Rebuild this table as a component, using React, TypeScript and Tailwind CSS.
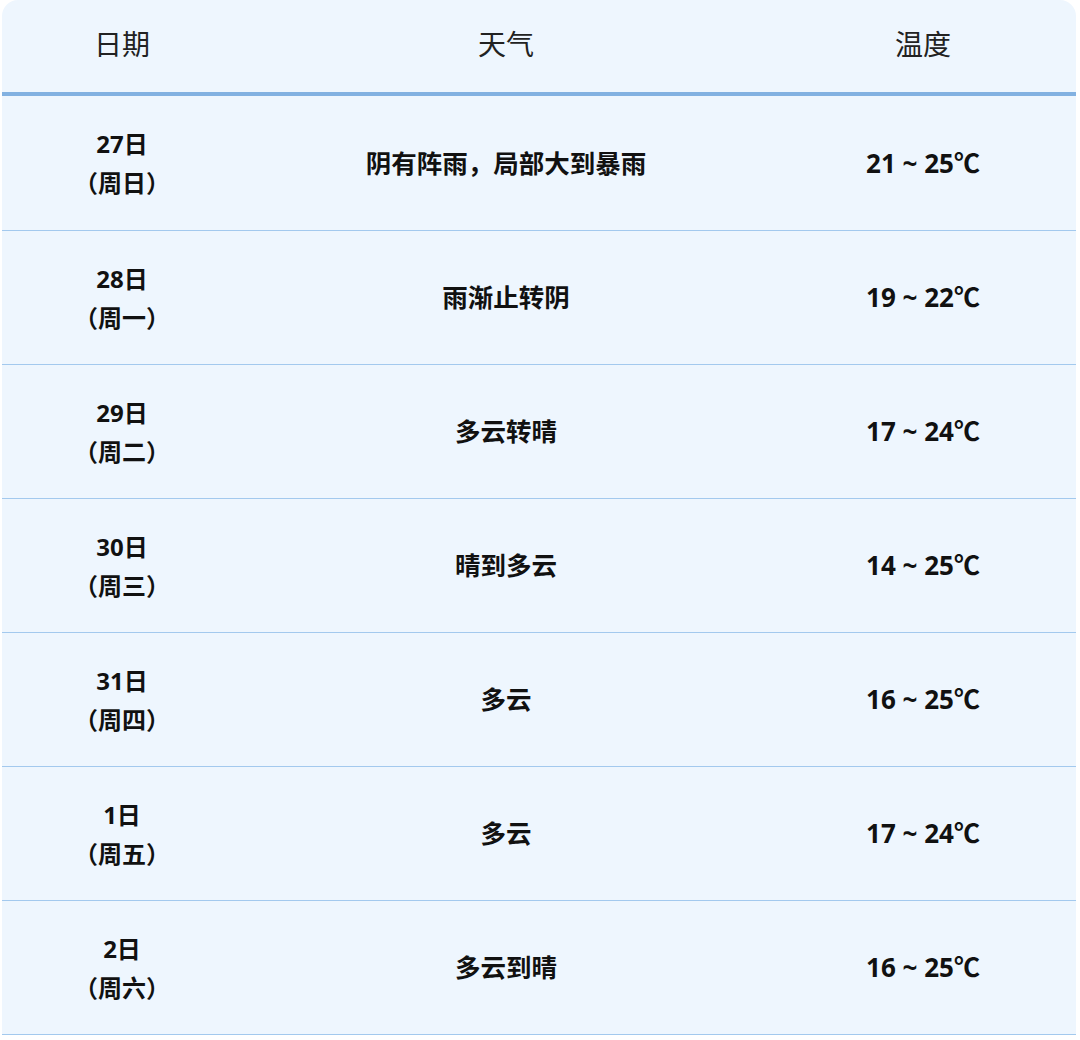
const rows = [
  { day: "27日", week: "（周日）", weather: "阴有阵雨，局部大到暴雨", temp: "21 ~ 25℃" },
  { day: "28日", week: "（周一）", weather: "雨渐止转阴", temp: "19 ~ 22℃" },
  { day: "29日", week: "（周二）", weather: "多云转晴", temp: "17 ~ 24℃" },
  { day: "30日", week: "（周三）", weather: "晴到多云", temp: "14 ~ 25℃" },
  { day: "31日", week: "（周四）", weather: "多云", temp: "16 ~ 25℃" },
  { day: "1日", week: "（周五）", weather: "多云", temp: "17 ~ 24℃" },
  { day: "2日", week: "（周六）", weather: "多云到晴", temp: "16 ~ 25℃" },
];

export default function App() {
  return (
    <div
      className="w-[1080px] h-[1040px] bg-white"
      style={{ fontFamily: '"Open Sans", "Noto Sans CJK SC", sans-serif' }}
    >
      <div className="ml-[2px] w-[1074px] bg-[#eef6fe] rounded-t-[16px]">
        <div className="grid grid-cols-[240px_528px_306px] h-[96px] pb-[4px] items-center border-b-[4px] border-[#82b1e1] text-[28px] text-[#222]">
          <div className="text-center">日期</div>
          <div className="text-center">天气</div>
          <div className="text-center">温度</div>
        </div>
        {rows.map((r, i) => (
          <div
            key={i}
            className={`grid grid-cols-[240px_528px_306px] items-center border-b border-[#a3c9ee] font-bold text-[25.5px] text-[#111] ${
              i === 0 ? "h-[135px]" : "h-[134px]"
            }`}
          >
            <div className="flex flex-col items-center leading-[39px] text-[24px]">
              <span>{r.day}</span>
              <span>{r.week}</span>
            </div>
            <div className="text-center">{r.weather}</div>
            <div className="text-center text-[26px]">{r.temp}</div>
          </div>
        ))}
      </div>
    </div>
  );
}
